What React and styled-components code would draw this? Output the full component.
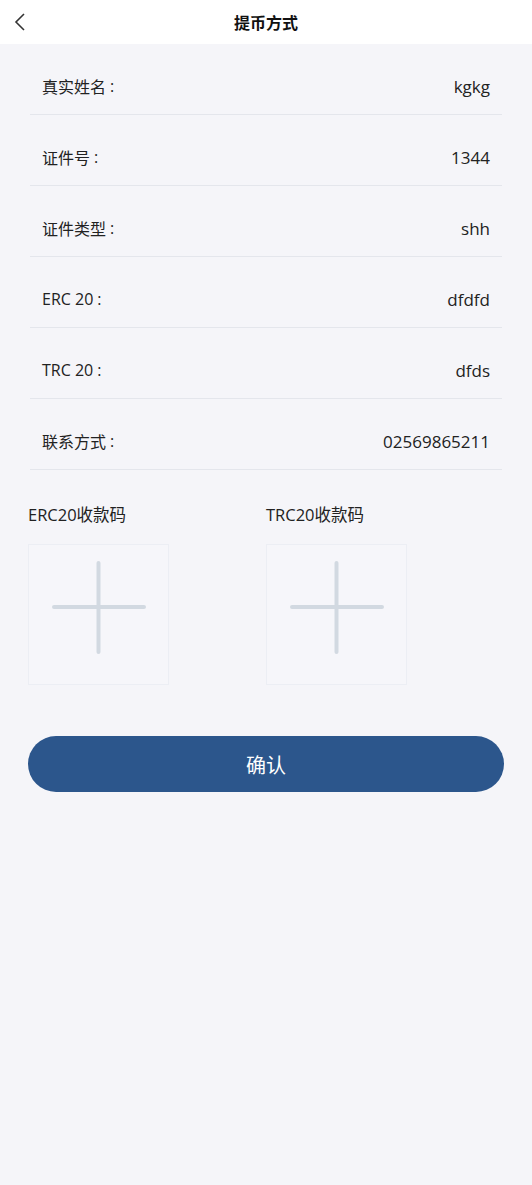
import React from "react";
import styled, { createGlobalStyle } from "styled-components";

const Global = createGlobalStyle`
  html, body { margin: 0; padding: 0; background: #f5f5f9; }
  body { font-family: "Open Sans", "Noto Sans CJK SC", sans-serif; color: #222; }
`;

const Page = styled.div`
  min-height: 1185px;
  background: #f5f5f9;
`;

const Header = styled.header`
  height: 44px;
  background: #fff;
  display: flex;
  align-items: center;
  justify-content: center;
  position: relative;
`;

const Back = styled.button`
  position: absolute;
  left: 10px;
  top: 10px;
  width: 20px;
  height: 24px;
  border: none;
  background: none;
  padding: 0;
  display: flex;
  align-items: center;
  justify-content: center;
`;

const Title = styled.h1`
  margin: 0;
  font-family: "Noto Sans CJK SC", sans-serif;
  font-size: 16px;
  font-weight: 700;
  color: #111;
`;

const List = styled.div`
  margin: 0 30px;
`;

const Row = styled.div`
  margin-top: 14px;
  height: 56px;
  border-bottom: 1px solid #e4e6ec;
  display: flex;
  align-items: center;
  justify-content: space-between;
  padding: 0 12px;
  font-size: 16px;
  color: #222;
`;

const Label = styled.span`
  display: flex;
  align-items: center;
`;

const Colon = styled.span`
  margin-left: 4px;
`;

const Value = styled.span`
  font-size: 17px;
`;

const Uploads = styled.div`
  display: grid;
  grid-template-columns: 238px 238px;
  margin: 34px 28px 0;
`;

const UploadCol = styled.div`
  display: flex;
  flex-direction: column;
`;

const UploadLabel = styled.div`
  font-size: 16.5px;
  color: #222;
  line-height: 22px;
`;

const UploadBox = styled.div`
  margin-top: 18px;
  width: 139px;
  height: 139px;
  border: 1px solid #eceef4;
  background: #f6f6fa;
  display: flex;
`;

const Confirm = styled.button`
  display: block;
  margin: 51px 28px 0;
  width: calc(100% - 56px);
  height: 56px;
  border: none;
  border-radius: 28px;
  background: #2c568c;
  color: #fff;
  font-family: "Noto Sans CJK SC", sans-serif;
  font-size: 20px;
`;

const Plus = () => (
  <svg width="139" height="139" viewBox="0 0 139 139">
    <path d="M69.5 18 V107 M25 62 H115" stroke="#d2d9e1" strokeWidth="4" strokeLinecap="round" fill="none" />
  </svg>
);

const rows = [
  ["真实姓名", "kgkg"],
  ["证件号", "1344"],
  ["证件类型", "shh"],
  ["ERC 20", "dfdfd"],
  ["TRC 20", "dfds"],
  ["联系方式", "02569865211"],
];

export default function App() {
  return (
    <Page>
      <Global />
      <Header>
        <Back aria-label="back">
          <svg width="12" height="20" viewBox="0 0 12 20">
            <path d="M10 2 L2 10 L10 18" stroke="#333" strokeWidth="1.6" fill="none" />
          </svg>
        </Back>
        <Title>提币方式</Title>
      </Header>
      <List>
        {rows.map(([k, v]) => (
          <Row key={k}>
            <Label>
              {k}
              <Colon>:</Colon>
            </Label>
            <Value>{v}</Value>
          </Row>
        ))}
      </List>
      <Uploads>
        <UploadCol>
          <UploadLabel>ERC20收款码</UploadLabel>
          <UploadBox><Plus /></UploadBox>
        </UploadCol>
        <UploadCol>
          <UploadLabel>TRC20收款码</UploadLabel>
          <UploadBox><Plus /></UploadBox>
        </UploadCol>
      </Uploads>
      <Confirm>确认</Confirm>
    </Page>
  );
}
